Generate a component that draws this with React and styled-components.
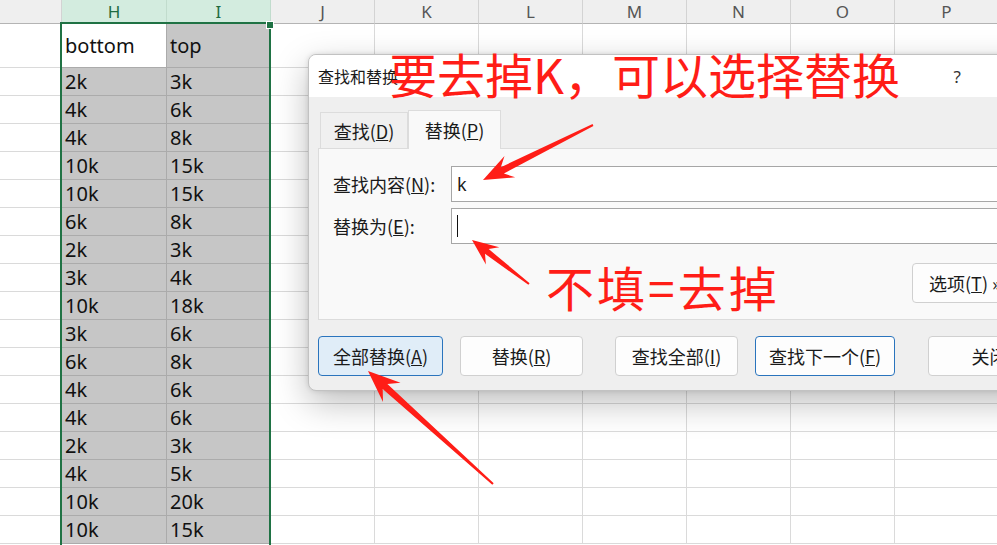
import React from 'react'
import styled, { createGlobalStyle } from 'styled-components'

const GlobalStyle = createGlobalStyle`
  html, body { margin: 0; padding: 0; background: #fff; overflow: hidden; }
`

const COLS = [62, 105, 104, 104, 104, 104, 104, 104, 104, 104]
const LETTERS = ['', 'H', 'I', 'J', 'K', 'L', 'M', 'N', 'O', 'P']
const DATA = [
    ['2k', '3k'], ['4k', '6k'], ['4k', '8k'], ['10k', '15k'], ['10k', '15k'],
    ['6k', '8k'], ['2k', '3k'], ['3k', '4k'], ['10k', '18k'], ['3k', '6k'],
    ['6k', '8k'], ['4k', '6k'], ['4k', '6k'], ['2k', '3k'], ['4k', '5k'],
    ['10k', '20k'], ['10k', '15k'],
]

const Page = styled.div`
    position: relative;
    width: 997px;
    height: 545px;
    overflow: hidden;
    background: #fff;
`

const Sheet = styled.div`
    display: grid;
    grid-template-columns: ${COLS.map(c => c + 'px').join(' ')};
    grid-template-rows: 24px 44px repeat(17, 28px);
    font-family: "Noto Sans", "Noto Sans CJK SC", sans-serif;
`

const HeadCell = styled.div`
    display: flex;
    align-items: center;
    justify-content: center;
    background: ${p => p.$sel ? '#d3ecdf' : '#efefef'};
    color: ${p => p.$sel ? '#1d6b41' : '#555'};
    border-right: 1px solid ${p => p.$sel ? '#c1dccd' : '#d3d3d3'};
    border-bottom: 1px solid #b4b4b4;
    font-size: 17px;
`

const Cell = styled.div`
    display: flex;
    align-items: center;
    padding-left: 3px;
    background: ${p => p.$active ? '#fff' : p.$sel ? '#c6c6c6' : '#fff'};
    border-right: 1px solid ${p => p.$sel ? '#ababab' : '#dadada'};
    border-bottom: 1px solid ${p => p.$sel ? '#ababab' : '#dadada'};
    color: #111;
    font-size: 20px;
    white-space: nowrap;
    overflow: hidden;
`

const Selection = styled.div`
    position: absolute;
    left: 60px;
    top: 22px;
    width: 211px;
    height: 540px;
    border: 2px solid #1f7244;
    box-sizing: border-box;
    pointer-events: none;
`

const Handle = styled.div`
    position: absolute;
    left: 266px;
    top: 21px;
    width: 6px;
    height: 6px;
    background: #1f7244;
    border: 1px solid #fff;
`

const Dialog = styled.div`
    position: absolute;
    left: 308px;
    top: 54px;
    width: 730px;
    height: 337px;
    box-sizing: border-box;
    background: #efefef;
    border: 1px solid #c2c2c2;
    border-radius: 8px;
    box-shadow: 0 12px 34px rgba(0, 0, 0, 0.26), 0 0 5px rgba(0, 0, 0, 0.12);
    display: flex;
    flex-direction: column;
    overflow: hidden;
    font-family: "Noto Sans CJK SC", sans-serif;
    font-size: 18px;
    color: #1a1a1a;
`

const TitleBar = styled.div`
    height: 42px;
    flex: none;
    background: #fff;
    display: flex;
    align-items: center;
    padding-left: 9px;
    font-size: 16px;
`

const Help = styled.span`
    margin-left: auto;
    margin-right: 76px;
    color: #333;
    font-family: "Noto Sans", sans-serif;
    font-size: 17px;
`

const Body = styled.div`
    padding: 13px 0 0 9px;
    display: flex;
    flex-direction: column;
`

const Tabs = styled.div`
    display: flex;
    align-items: flex-end;
    height: 38px;
    padding-left: 2px;
`

const Tab = styled.div`
    box-sizing: border-box;
    width: ${p => p.$w}px;
    height: ${p => p.$active ? 39 : 36}px;
    margin-bottom: ${p => p.$active ? -1 : 0}px;
    background: ${p => p.$active ? '#f9f9f9' : '#f0f0f0'};
    border: 1px solid #dcdcdc;
    border-bottom: none;
    display: flex;
    align-items: center;
    justify-content: center;
    position: relative;
    z-index: ${p => p.$active ? 1 : 0};
`

const Panel = styled.div`
    box-sizing: border-box;
    height: 172px;
    background: #f9f9f9;
    border: 1px solid #dcdcdc;
    padding: 17px 0 0 14px;
`

const Form = styled.div`
    display: grid;
    grid-template-columns: 118px 1fr;
    grid-auto-rows: 36px;
    row-gap: 6px;
`

const Label = styled.div`
    display: flex;
    align-items: center;
    white-space: nowrap;
`

const Input = styled.div`
    box-sizing: border-box;
    background: #fff;
    border: 1px solid #a6a6a6;
    display: flex;
    align-items: center;
    padding-left: 5px;
    font-family: "Noto Sans", sans-serif;
    font-size: 18px;
`

const Caret = styled.span`
    width: 1px;
    height: 22px;
    background: #111;
`

const OptionsRow = styled.div`
    display: flex;
    padding: 19px 0 0 579px;
`

const Button = styled.div`
    box-sizing: border-box;
    flex: none;
    width: ${p => p.$w}px;
    height: 40px;
    margin-left: ${p => p.$gap || 0}px;
    border-radius: 4px;
    background: ${p => p.$primary ? '#e0edf8' : '#fdfdfd'};
    border: 1px solid ${p => p.$primary || p.$focus ? '#2a74bd' : '#d0d0d0'};
    display: flex;
    align-items: center;
    justify-content: ${p => p.$start ? 'flex-start' : 'center'};
    padding-left: ${p => p.$start ? 16 : 0}px;
    white-space: nowrap;
    overflow: hidden;
`

const Buttons = styled.div`
    display: flex;
    margin-top: 16px;
`

const Note = styled.div`
    position: absolute;
    left: ${p => p.$x}px;
    top: ${p => p.$y}px;
    font-family: "Noto Sans CJK SC", sans-serif;
    font-size: 48px;
    letter-spacing: ${p => p.$ls || 0}px;
    line-height: 1;
    color: #ff1d17;
    white-space: nowrap;
    pointer-events: none;
`

const Overlay = styled.svg`
    position: absolute;
    left: 0;
    top: 0;
    pointer-events: none;
`

function arrowPoints([tx, ty], [px, py], L, hw, nw) {
    const dx = px - tx, dy = py - ty
    const len = Math.hypot(dx, dy)
    const ux = dx / len, uy = dy / len
    const nx = -uy, ny = ux
    const bx = px - ux * L, by = py - uy * L
    const kx = px - ux * L * 0.72, ky = py - uy * L * 0.72
    return [
        [tx + nx * 1, ty + ny * 1],
        [kx + nx * nw, ky + ny * nw],
        [bx + nx * hw, by + ny * hw],
        [px, py],
        [bx - nx * hw, by - ny * hw],
        [kx - nx * nw, ky - ny * nw],
        [tx - nx * 1, ty - ny * 1],
    ].map(p => p.map(v => v.toFixed(1)).join(',')).join(' ')
}

const ARROWS = [
    { tail: [593, 125], tip: [483, 180], L: 30, hw: 12, nw: 3.5 },
    { tail: [529, 284], tip: [472, 240], L: 26, hw: 11, nw: 3 },
    { tail: [493, 484], tip: [368, 371], L: 32, hw: 13, nw: 3.5 },
]

const Key = ({ children }) => <u>{children}</u>

const App = () => {
    return (
        <Page>
            <GlobalStyle />
            <Sheet>
                {LETTERS.map((l, i) => (
                    <HeadCell key={'h' + i} $sel={i === 1 || i === 2}>{l}</HeadCell>
                ))}
                {COLS.map((_, i) => (
                    <Cell key={'r0' + i} $sel={i === 1 || i === 2} $active={i === 1}>
                        {i === 1 ? 'bottom' : i === 2 ? 'top' : ''}
                    </Cell>
                ))}
                {DATA.map((row, r) => COLS.map((_, i) => (
                    <Cell key={r + '-' + i} $sel={i === 1 || i === 2}>
                        {i === 1 ? row[0] : i === 2 ? row[1] : ''}
                    </Cell>
                )))}
            </Sheet>
            <Selection />
            <Handle />

            <Dialog>
                <TitleBar>
                    查找和替换
                    <Help>?</Help>
                </TitleBar>
                <Body>
                    <Tabs>
                        <Tab $w={88}>查找(<Key>D</Key>)</Tab>
                        <Tab $w={93} $active>替换(<Key>P</Key>)</Tab>
                    </Tabs>
                    <Panel>
                        <Form>
                            <Label>查找内容(<Key>N</Key>):</Label>
                            <Input>k</Input>
                            <Label>替换为(<Key>E</Key>):</Label>
                            <Input><Caret /></Input>
                        </Form>
                        <OptionsRow>
                            <Button $w={110} $start>选项(<Key>T</Key>) »</Button>
                        </OptionsRow>
                    </Panel>
                    <Buttons>
                        <Button $w={125} $primary>全部替换(<Key>A</Key>)</Button>
                        <Button $w={123} $gap={17}>替换(<Key>R</Key>)</Button>
                        <Button $w={123} $gap={32}>查找全部(<Key>I</Key>)</Button>
                        <Button $w={140} $gap={17} $focus>查找下一个(<Key>F</Key>)</Button>
                        <Button $w={123} $gap={33}>关闭</Button>
                    </Buttons>
                </Body>
            </Dialog>

            <Note $x={389} $y={49}>要去掉K，可以选择替换</Note>
            <Note $x={546} $y={262} $ls={3}>不填=去掉</Note>

            <Overlay width="997" height="545" viewBox="0 0 997 545">
                {ARROWS.map((a, i) => (
                    <polygon key={i} points={arrowPoints(a.tail, a.tip, a.L, a.hw, a.nw)} fill="#ff1d17" />
                ))}
            </Overlay>
        </Page>
    )
}

export default App
